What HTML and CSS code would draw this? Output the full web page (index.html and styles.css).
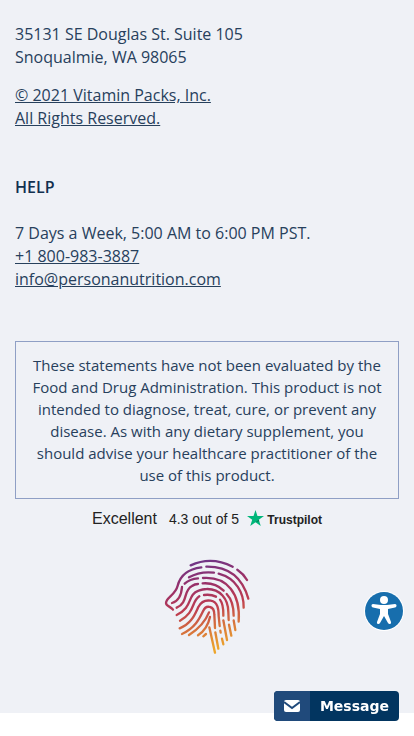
FILE: index.html
```html
<!DOCTYPE html>
<html lang="en">
<head>
  <meta charset="UTF-8">
  <meta name="viewport" content="width=device-width, initial-scale=1.0">
  <title>Persona Nutrition</title>
  <link rel="stylesheet" href="styles.css">
</head>
<body>
  <footer class="footer">
    <address class="endereco">
      35131 SE Douglas St. Suite 105<br>
      Snoqualmie, WA 98065
    </address>
    <p class="copyright"><a href="#">© 2021 Vitamin Packs, Inc.<br>All Rights Reserved.</a></p>

    <section class="help">
      <h2>HELP</h2>
      <p>7 Days a Week, 5:00 AM to 6:00 PM PST.</p>
      <p><a href="tel:+18009833887">+1 800-983-3887</a></p>
      <p><a href="mailto:info@personanutrition.com">info@personanutrition.com</a></p>
    </section>

    <p class="disclaimer">These statements have not been evaluated by the Food and Drug Administration. This product is not intended to diagnose, treat, cure, or prevent any disease. As with any dietary supplement, you should advise your healthcare practitioner of the use of this product.</p>

    <a class="trustpilot" href="#">
      <span class="rating">Excellent</span>
      <span class="score">4.3 out of 5</span>
      <span class="brand">
        <svg class="star" viewBox="0 0 18 17" aria-hidden="true">
          <path fill="#00b67a" d="M9 0l2.100 6.400H18l-5.500 4L14.600 17 9 13 3.400 17l2.100-6.600L0 6.400h6.900z"/>
          <path fill="#007a52" d="M13 12l-.5-1.600L9 13z"/>
        </svg>
        Trustpilot
      </span>
    </a>

    <a class="logo" href="#" aria-label="Persona">
      <svg viewBox="0 0 270 300" fill="none" stroke="url(#cores)" stroke-width="7" stroke-linecap="round" stroke-linejoin="round">
        <defs>
          <linearGradient id="cores" gradientUnits="userSpaceOnUse" x1="90" y1="20" x2="150" y2="300">
            <stop offset="0" stop-color="#64378f"/>
            <stop offset=".3" stop-color="#983069"/>
            <stop offset=".55" stop-color="#bd3c51"/>
            <stop offset=".78" stop-color="#d8763c"/>
            <stop offset="1" stop-color="#eda52b"/>
          </linearGradient>
        </defs>
        <g transform="translate(-22 -18)">
          <path d="M108 43Q170 14 234 47M248 56Q266 68 277 87"/>
          <path d="M140 49C100 54 77 72 69 104C62 132 34 140 34 156C34 166 48 166 55 176M155 47C216 46 262 76 281 143"/>
          <path d="M103 79Q136 60 178 65M192 68C244 82 268 125 267 170M82 108C80 135 70 151 52 156"/>
          <path d="M90 98Q105 84 130 82M145 81C218 76 258 128 252 212"/>
          <path d="M66 170C102 154 84 120 112 105Q120 99 130 99M144 97Q182 94 207 119M216 129C236 150 237 174 237 194M237 208L242 237"/>
          <path d="M66 192C116 169 96 132 132 119Q144 114 156 114C196 113 221 144 221 183L222 207M223 221L230 254"/>
          <path d="M76 209C122 184 110 151 134 136M148 132Q168 129 184 137M196 146C207 161 206 178 206 194M206 208L217 267"/>
          <path d="M75 232C110 218 120 192 131 168Q143 145 168 149C190 153 192 175 192 195L195 225M197 239L198 245M202 263L206 280"/>
          <path d="M82 249C121 231 134 204 145 181Q152 164 166 168Q179 171 179 191L181 231M182 244L191 293"/>
          <path d="M103 252Q147 224 163 184M130 253Q158 235 166 198M146 256L154 249"/>
          <path d="M164 229L181 305"/>
        </g>
      </svg>
    </a>
  </footer>

  <button class="acessibilidade" type="button" aria-label="Accessibility">
    <svg viewBox="0 0 40 40" aria-hidden="true">
      <circle cx="20" cy="20" r="20" fill="#fff"/>
      <circle cx="20" cy="20" r="19" fill="#176ead"/>
      <circle cx="20" cy="9" r="4" fill="#fff"/>
      <path fill="#fff" d="M9 13c-2 0-2 3 0 3.500l7 1.500V23l-3 8c-.6 2 2 3 3 1l4-7 4 7c1 2 3.600 1 3-1l-3-8v-5l7-1.500c2-.5 2-3.500 0-3.500l-8 1h-6z"/>
    </svg>
  </button>

  <button class="mensagem" type="button">
    <span class="envelope">
      <svg viewBox="0 0 16 12" aria-hidden="true">
        <rect width="16" height="12" rx="2" fill="#fff"/>
        <path d="M0 2l8 6 8-6" fill="none" stroke="#204a7b" stroke-width="2"/>
      </svg>
    </span>
    <span class="texto">Message</span>
  </button>
</body>
</html>
```
FILE: styles.css
```css
:root {
  --text-color: #27405c;
  --dark-color: #12304f;
  --background: #eff1f6;
  --border-color: #8f9fc5;
  --message: #023560;
  --message-light: #204a7b;
}

* {
  box-sizing: border-box;
  padding: 0;
  margin: 0;
}

body {
  font-family: 'Open Sans', sans-serif;
  font-size: 16px;
  line-height: 23px;
  color: var(--text-color);
  background-color: #fff;
}

a {
  color: inherit;
}

.footer {
  display: flex;
  flex-direction: column;
  background-color: var(--background);
  padding: 23px 15px 56px;
}

.endereco {
  font-style: normal;
}

.copyright {
  margin-top: 15px;
}

.help {
  margin-top: 46px;
  h2 {
    font-size: 16px;
    font-weight: 600;
    color: var(--dark-color);
    margin-bottom: 23px;
  }
}

.disclaimer {
  margin-top: 50px;
  padding: 12px 15px;
  border: 1px solid var(--border-color);
  font-size: 15px;
  line-height: 22px;
  text-align: center;
}

.trustpilot {
  display: flex;
  justify-content: center;
  align-items: baseline;
  margin-top: 8px;
  font-family: 'Liberation Sans', Arial, sans-serif;
  font-size: 14px;
  color: #222;
  text-decoration: none;
  .rating {
    font-size: 16px;
    margin-right: 12px;
  }
  .score {
    margin-right: 8px;
  }
  .brand {
    font-size: 12px;
    font-weight: bold;
  }
  .star {
    width: 17px;
    height: 16px;
    vertical-align: -2px;
  }
}

.logo {
  align-self: center;
  margin-top: 25px;
  svg {
    display: block;
    width: 90px;
    height: 100px;
  }
}

button {
  border: 0;
  cursor: pointer;
}

/* widgets over the page */
.acessibilidade {
  position: fixed;
  right: 10px;
  bottom: 105px;
  width: 40px;
  height: 40px;
  border-radius: 50%;
  background: none;
  svg {
    display: block;
  }
}

.mensagem {
  position: fixed;
  right: 15px;
  bottom: 15px;
  display: flex;
  height: 30px;
  border-radius: 4px;
  overflow: hidden;
  background-color: var(--message);
  color: #fff;
  font-family: 'DejaVu Sans', Verdana, sans-serif;
  font-size: 14px;
  font-weight: bold;
  .envelope {
    display: flex;
    align-items: center;
    justify-content: center;
    width: 36px;
    height: 30px;
    background-color: var(--message-light);
    svg {
      width: 16px;
      height: 12px;
    }
  }
  .texto {
    padding: 0 10px;
    line-height: 30px;
  }
}
```
